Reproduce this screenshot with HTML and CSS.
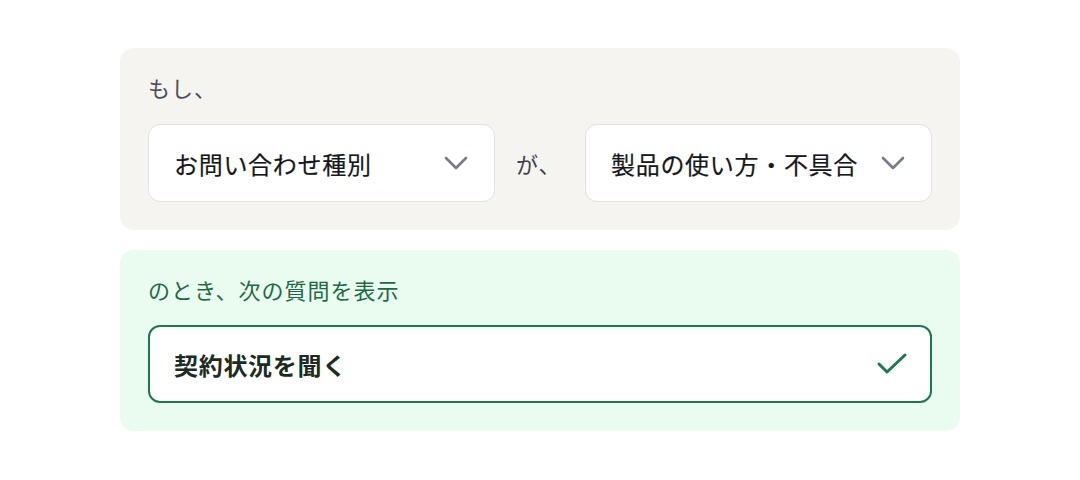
FILE: index.html
```html
<!DOCTYPE html>
<html lang="ja">
<head>
<meta charset="utf-8">
<link rel="stylesheet" href="styles.css">
</head>
<body>
<main class="rules">
  <section class="card card-if">
    <p class="label">もし、</p>
    <div class="row">
      <div class="select">
        <span class="select-text">お問い合わせ種別</span>
        <svg class="chev" viewBox="0 0 24 14" width="24" height="14" aria-hidden="true"><path d="M2 2 L12 12 L22 2" fill="none" stroke="#757b8c" stroke-width="2.6" stroke-linecap="round" stroke-linejoin="round"/></svg>
      </div>
      <span class="conj">が、</span>
      <div class="select">
        <span class="select-text">製品の使い方・不具合</span>
        <svg class="chev" viewBox="0 0 24 14" width="24" height="14" aria-hidden="true"><path d="M2 2 L12 12 L22 2" fill="none" stroke="#757b8c" stroke-width="2.6" stroke-linecap="round" stroke-linejoin="round"/></svg>
      </div>
    </div>
  </section>
  <section class="card card-then">
    <p class="label label-green">のとき、次の質問を表示</p>
    <div class="select select-chosen">
      <span class="select-text strong">契約状況を聞く</span>
      <svg class="check" viewBox="0 0 32 24" width="32" height="24" aria-hidden="true"><path d="M3 12 L11 20 L29 3" fill="none" stroke="#177a50" stroke-width="3" stroke-linecap="round" stroke-linejoin="round"/></svg>
    </div>
  </section>
</main>
</body>
</html>
```

FILE: styles.css
```css
* { box-sizing: border-box; }
html, body { margin: 0; padding: 0; background: #ffffff; }
body {
  font-family: "Noto Sans CJK JP", "Noto Sans", sans-serif;
  color: #1f2328;
}
.rules {
  width: 840px;
  margin: 48px 0 0 120px;
  display: flex;
  flex-direction: column;
  gap: 20px;
}
.card {
  border-radius: 14px;
  padding: 25px 28px 28px;
  display: flex;
  flex-direction: column;
  gap: 23px;
}
.card-if { background: #f6f4f1; }
.card-then { background: #eafbef; gap: 22px; }
.label {
  margin: 0;
  font-size: 22px;
  line-height: 28px;
  letter-spacing: 1px;
  color: #4a4f5c;
}
.label-green { color: #1b6b47; }
.row {
  display: flex;
  align-items: center;
}
.conj {
  flex: none;
  width: 90px;
  padding-left: 21px;
  font-size: 22px;
  letter-spacing: 1px;
  color: #3e434f;
}
.select {
  flex: 1 1 0;
  min-width: 0;
  height: 78px;
  background: #ffffff;
  border: 1px solid #e1e1e6;
  border-radius: 12px;
  padding: 0 26px 0 25px;
  display: flex;
  align-items: center;
  justify-content: space-between;
  gap: 12px;
}
.select-text {
  font-size: 24px;
  font-weight: 400;
  letter-spacing: 0.7px;
  white-space: nowrap;
  color: #15181d;
  -webkit-text-stroke: 0.2px #15181d;
}
.chev { flex: none; }
.select-chosen {
  flex: none;
  border: 2px solid #177a50;
  padding: 0 22px 0 24px;
}
.strong { font-weight: 700; color: #1c2b23; -webkit-text-stroke: 0; }
.check { flex: none; }
```
